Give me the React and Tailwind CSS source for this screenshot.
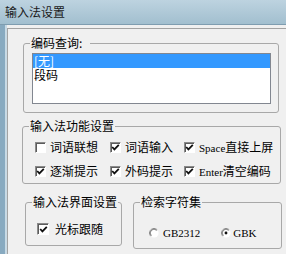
function CheckBox({ checked, size = "w-[11px] h-[11px]" }) {
  return (
    <span
      className={
        "relative shrink-0 bg-white border border-t-[#8a8a8a] border-l-[#8a8a8a] border-r-white border-b-white shadow-[inset_1px_1px_0_#5c5c5c] flex items-center justify-center " +
        size
      }
    >
      {checked && (
        <svg width="9" height="9" viewBox="0 0 9 9">
          <polyline points="1.2,4 3.4,6.4 7.8,1.8" fill="none" stroke="#111" strokeWidth="1.8" />
        </svg>
      )}
    </span>
  );
}

function Radio({ checked }) {
  return (
    <svg width="10" height="10" viewBox="0 0 12 12" className="shrink-0">
      <circle cx="6" cy="6" r="5.5" fill="#fff" />
      <path d="M9.9 2.1 A5.5 5.5 0 0 0 2.1 9.9" fill="none" stroke="#8a8a8a" strokeWidth="1" />
      <path d="M9.2 2.8 A4.5 4.5 0 0 0 2.8 9.2" fill="none" stroke="#555" strokeWidth="1" />
      {checked && <circle cx="6" cy="6" r="1.7" fill="#111" />}
    </svg>
  );
}

function Option({ checked, children }) {
  return (
    <div className="flex items-center gap-[4px] h-[16px] whitespace-nowrap">
      <CheckBox checked={checked} />
      <span>{children}</span>
    </div>
  );
}

const latin = "font-['Liberation_Serif',serif] text-[11px]";

export default function App() {
  return (
    <div className="w-[286px] h-[254px] overflow-hidden flex flex-col bg-[#f0f0f0] text-[12px] leading-[16px] text-black font-['Noto_Sans_CJK_SC','Noto_Sans',sans-serif]">
      {/* title bar */}
      <div className="h-[25px] shrink-0 bg-gradient-to-b from-[#bdd3e0] to-[#a2bfcf] border-b border-[#7f9db0] flex items-center pl-[5px] text-[#1a1a1a]">
        输入法设置
      </div>

      <div className="flex flex-1">
        <div className="w-[7px] bg-[#88aac0] border-r-2 border-[#c8dae5]" />
        <div className="flex-1 pt-[3px]">
          <div className="h-full border-l border-t border-[#a3a3a3]">
            {/* 编码查询 */}
            <fieldset className="mt-[6px] ml-[15px] w-[256px] h-[78px] border border-[#a8a8a8] rounded-[3px]">
              <legend className="ml-[6px] px-[1px] pr-[8px] leading-[16px]">编码查询:</legend>
              <div className="mt-[2px] ml-[8px] w-[239px] h-[51px] bg-white border border-[#828790] overflow-hidden">
                <div className="h-[14px] leading-[14px] bg-[#3399ff] text-white pl-[1px]">[无]</div>
                <div className="h-[14px] leading-[14px] pl-[1px]">段码</div>
              </div>
            </fieldset>

            {/* 输入法功能设置 */}
            <fieldset className="mt-[5px] ml-[14px] w-[259px] h-[66px] border border-[#a8a8a8] rounded-[3px]">
              <legend className="ml-[6px] px-[1px] leading-[16px]">输入法功能设置</legend>
              <div className="grid grid-cols-[75px_74px_auto] gap-y-[8px] pl-[12px] pt-[5px]">
                <Option>词语联想</Option>
                <Option checked>词语输入</Option>
                <Option checked>
                  <span className={latin}>Space</span>直接上屏
                </Option>
                <Option checked>逐渐提示</Option>
                <Option checked>外码提示</Option>
                <Option checked>
                  <span className={latin}>Enter</span>清空编码
                </Option>
              </div>
            </fieldset>

            <div className="flex items-start mt-[10px]">
              {/* 输入法界面设置 */}
              <fieldset className="ml-[17px] w-[97px] h-[52px] border border-[#a8a8a8] rounded-[3px]">
                <legend className="ml-[6px] px-[1px] leading-[16px]">输入法界面设置</legend>
                <div className="flex items-center gap-[6px] mt-[11px] pl-[11px] h-[16px]">
                  <CheckBox checked size="w-[12px] h-[12px]" />
                  <span>光标跟随</span>
                </div>
              </fieldset>

              {/* 检索字符集 */}
              <fieldset className="ml-[11px] w-[149px] h-[55px] border border-[#a8a8a8] rounded-[3px]">
                <legend className="ml-[6px] px-[1px] leading-[16px]">检索字符集</legend>
                <div className="flex items-center mt-[15px] pl-[15px] h-[16px]">
                  <Radio />
                  <span className={"ml-[4px] " + latin}>GB2312</span>
                  <span className="ml-[21px] flex items-center">
                    <Radio checked />
                  </span>
                  <span className={"ml-[2px] " + latin}>GBK</span>
                </div>
              </fieldset>
            </div>
          </div>
        </div>
      </div>
    </div>
  );
}
